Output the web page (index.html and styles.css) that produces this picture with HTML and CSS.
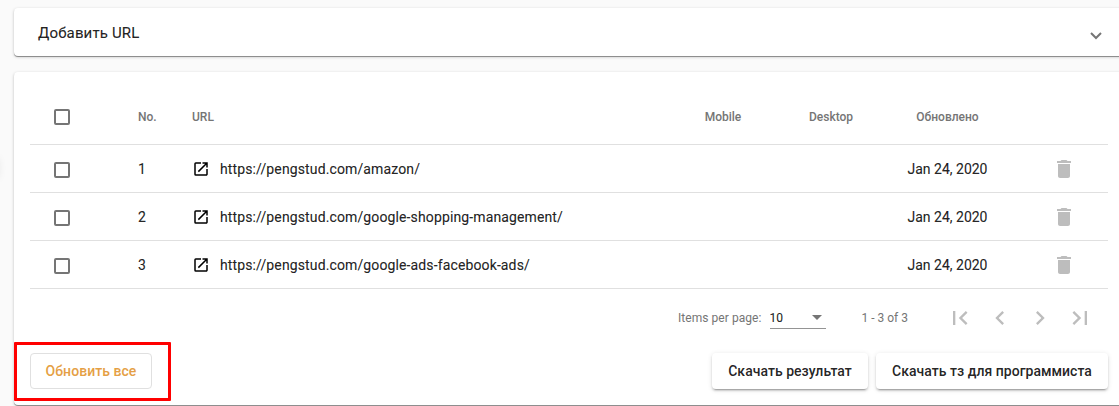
FILE: index.html
```html
<!DOCTYPE html>
<html lang="ru">
<head>
<meta charset="utf-8">
<title>URL</title>
<link rel="stylesheet" href="styles.css">
</head>
<body>
<svg class="defs" width="0" height="0">
  <symbol id="open" viewBox="0 0 24 24"><path d="M19 19H5V5h7V3H5a2 2 0 0 0-2 2v14a2 2 0 0 0 2 2h14c1.100 0 2-.9 2-2v-7h-2v7zM14 3v2h3.590l-9.830 9.830 1.410 1.410L19 6.410V10h2V3h-7z"/></symbol>
  <symbol id="trash" viewBox="0 0 24 24"><path d="M6 19c0 1.100.9 2 2 2h8c1.100 0 2-.9 2-2V7H6v12zM19 4h-3.500l-1-1h-5l-1 1H5v2h14V4z"/></symbol>
</svg>
<span class="edge-shadow"></span>
<main class="page">
  <section class="card panel">
    <span class="panel-title">Добавить URL</span>
    <svg class="chevron" viewBox="0 0 12 8"><path d="M1 1l5 5 5-5"/></svg>
  </section>
  <section class="card content">
    <div class="table">
      <div class="row head">
        <div class="check"><span class="box"></span></div>
        <div>No.</div><div>URL</div>
        <div class="center">Mobile</div><div class="center">Desktop</div><div class="center">Обновлено</div><div></div>
      </div>
      <div class="row">
        <div class="check"><span class="box"></span></div>
        <div>1</div>
        <div class="url"><svg class="open"><use href="#open"/></svg><span>https://pengstud.com/amazon/</span></div>
        <div></div><div></div><div class="center date">Jan 24, 2020</div>
        <div class="center"><svg class="trash"><use href="#trash"/></svg></div>
      </div>
      <div class="row">
        <div class="check"><span class="box"></span></div>
        <div>2</div>
        <div class="url"><svg class="open"><use href="#open"/></svg><span>https://pengstud.com/google-shopping-management/</span></div>
        <div></div><div></div><div class="center date">Jan 24, 2020</div>
        <div class="center"><svg class="trash"><use href="#trash"/></svg></div>
      </div>
      <div class="row">
        <div class="check"><span class="box"></span></div>
        <div>3</div>
        <div class="url"><svg class="open"><use href="#open"/></svg><span>https://pengstud.com/google-ads-facebook-ads/</span></div>
        <div></div><div></div><div class="center date">Jan 24, 2020</div>
        <div class="center"><svg class="trash"><use href="#trash"/></svg></div>
      </div>
    </div>
    <div class="paginator">
      <span class="per-page">Items per page:</span>
      <div class="select"><span>10</span><i class="arrow"></i></div>
      <span class="range">1 - 3 of 3</span>
      <div class="nav">
        <svg viewBox="0 0 24 24"><path d="M18.410 16.590L13.820 12l4.590-4.590L17 6l-6 6 6 6zM6 6h2v12H6z"/></svg>
        <svg viewBox="0 0 24 24"><path d="M15.410 7.410L14 6l-6 6 6 6 1.410-1.410L10.830 12z"/></svg>
        <svg viewBox="0 0 24 24"><path d="M10 6L8.590 7.410 13.170 12l-4.580 4.590L10 18l6-6z"/></svg>
        <svg viewBox="0 0 24 24"><path d="M5.590 7.410L10.180 12l-4.590 4.590L7 18l6-6-6-6zM16 6h2v12h-2z"/></svg>
      </div>
    </div>
    <div class="actions">
      <div class="refresh"><button class="btn outlined">Обновить все</button><span class="highlight"></span></div>
      <button class="btn raised result">Скачать результат</button>
      <button class="btn raised spec">Скачать тз для программиста</button>
    </div>
  </section>
</main>
</body>
</html>
```
FILE: styles.css
```css
* { box-sizing: border-box; }
html { height: 100%; overflow: hidden; background: #fafafa; }
body { margin: 0; height: 406px; overflow: hidden; background: #fafafa; color: rgba(0,0,0,.87); font-family: Roboto, "Noto Sans", sans-serif; font-size: 14px; }
.defs { position: absolute; }
.edge-shadow { position: absolute; left: -8px; top: 158px; width: 6px; height: 20px; border-radius: 4px; box-shadow: 0 0 8px rgba(0,0,0,.1); }
.page { width: 1124px; padding: 8px 0 0 14px; display: flex; flex-direction: column; gap: 16px; }
.card { background: #fff; border-radius: 4px; box-shadow: 0 1px 0 rgba(0,0,0,.32), 0 1px 3px rgba(0,0,0,.25); }
.panel { height: 48px; padding: 0 22px 0 24px; display: flex; align-items: center; justify-content: space-between; }
.panel-title { font-size: 15px; letter-spacing: .15px; padding-top: 2px; -webkit-text-stroke: .15px; }
.chevron { width: 12px; height: 8px; margin-top: 8px; fill: none; stroke: #757575; stroke-width: 2; }
.content { height: 333px; padding: 16px; }
.row { display: grid; grid-template-columns: 108px 54px 477px 108px 108px 125px 1fr; height: 48px; align-items: center; border-bottom: 1px solid #e0e0e0; -webkit-text-stroke: .15px; }
.head { height: 57px; padding-top: 2px; font-size: 12px; font-weight: 500; color: #757575; -webkit-text-stroke: 0; }
.check { padding-left: 24px; display: flex; }
.box { width: 16px; height: 16px; border: 2px solid #757575; border-radius: 2px; }
.row:not(.head) .box { margin-top: 2px; }
.center { text-align: center; display: flex; justify-content: center; }
.row .center:last-child { padding-left: 10px; }
.url { display: flex; align-items: center; gap: 10px; letter-spacing: .125px; }
.open { width: 18px; height: 18px; }
.trash { width: 24px; height: 24px; fill: #bdbdbd; }
.paginator { height: 56px; margin-top: 1px; display: flex; align-items: center; font-size: 12px; color: #757575; justify-content: flex-end; }
.per-page { letter-spacing: .06px; }
.select { width: 56px; height: 22px; margin: 0 36px 0 8px; border-bottom: 1px solid #949494; display: flex; align-items: center; justify-content: space-between; color: rgba(0,0,0,.87); padding-right: 4px; -webkit-text-stroke: .15px; }
.arrow { border: 5px solid transparent; border-top-color: #757575; border-bottom: 0; }
.nav { display: flex; gap: 12px; margin: 0 14px 0 38px; }
.nav svg { width: 28px; height: 28px; fill: #bdbdbd; }
.actions { display: flex; gap: 8px; margin-top: 7px; }
.btn { height: 36px; padding: 0; border: 0; border-radius: 4px; background: #fff; font: 500 14px Roboto, "Noto Sans", sans-serif; color: rgba(0,0,0,.87); white-space: nowrap; }
.refresh { position: relative; margin-right: auto; }
.outlined { width: 122px; border: 1px solid #e0e0e0; color: #e59f45; letter-spacing: .05px; }
.raised { letter-spacing: .03px; box-shadow: 0 3px 1px -2px rgba(0,0,0,.2), 0 2px 2px 0 rgba(0,0,0,.14), 0 1px 5px 0 rgba(0,0,0,.12); }
.result { width: 156px; }
.spec { width: 232px; }
.highlight { position: absolute; left: -16px; top: -11px; width: 157px; height: 59px; border: 3px solid #f00; border-radius: 1px; }
```
